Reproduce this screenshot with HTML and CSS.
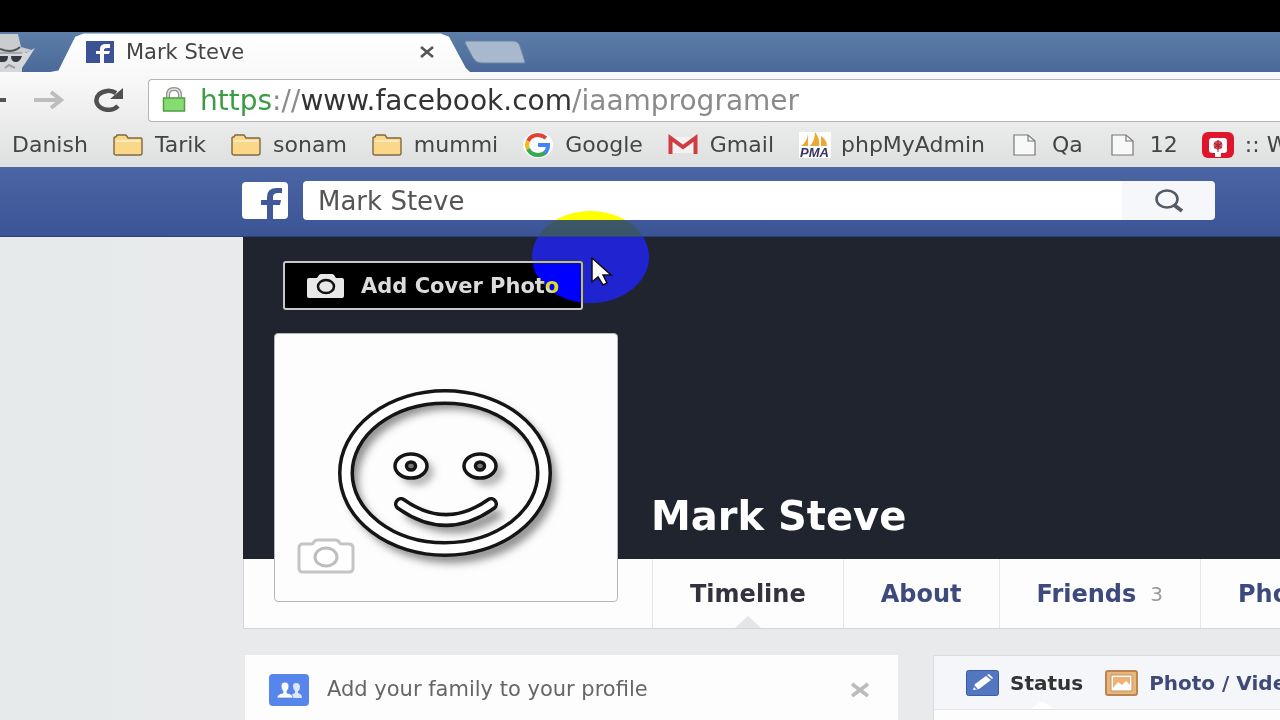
FILE: index.html
```
<!DOCTYPE html>
<html lang="en">
<head>
    <meta charset="UTF-8">
    <meta name="viewport" content="width=device-width, initial-scale=1.0">
    <title>Mark Steve</title>
    <link rel="stylesheet" href="styles.css">
</head>
<body>
    <svg class="defs" width="0" height="0">
        <symbol id="folder" viewBox="0 0 30 22">
            <path d="M1 19V4q0-1 1-1h1l1-2h9l2 3h13q1 0 1 1v14q0 2-2 2H3q-2 0-2-2z" fill="#fbd78a" stroke="#7d6a43" stroke-width="1.4"/>
            <path d="M3 7h24" stroke="#fdebbd" stroke-width="2"/>
        </symbol>
        <symbol id="page" viewBox="0 0 30 22">
            <path d="M4 1h14l7 6v14H4z" fill="#f8f8f8" stroke="#777" stroke-width="1.2"/>
            <path d="M18 1v6h7" fill="none" stroke="#777" stroke-width="1.2"/>
        </symbol>
    </svg>

    <header class="browser">
        <div class="tab-strip">
            <svg class="incognito" width="36" height="40" viewBox="0 0 36 40">
                <path d="M0 2h18l3 13 11 3-12 5H0z" fill="#c9cdd0"/>
                <path d="M0 17q12 5 20-2" fill="none" stroke="#555" stroke-width="2"/>
                <path d="M0 21h26l9-5-7 11-6 9v4H0z" fill="#d5d7d8"/>
                <path d="M0 20h22v2H0z" fill="#a4a9ad"/>
                <path d="M0 24h8q0 6-5 6H0zM11 24h11q-2 6-6 6-5 0-5-6z" fill="#333a42"/>
                <path d="M5 36l4-3 6 3" fill="none" stroke="#9aa0a5" stroke-width="2"/>
            </svg>
            <div class="tab">
                <svg width="28" height="22" viewBox="0 0 28 22">
                    <path d="M0 0h28v22H0z" fill="#3b5295"/>
                    <path d="M14 22v-9h-4v-3h4V8q0-5 6-5h4v4h-3q-3 0-3 2v1h6l-1 3h-5v9z" fill="#fff"/>
                </svg>
                <span class="tab-title">Mark Steve</span>
                <button class="icon-button" aria-label="Close tab">
                    <svg width="14" height="12" viewBox="0 0 14 12"><path d="M1 1l12 10M13 1L1 11" stroke="#555" stroke-width="2.6"/></svg>
                </button>
            </div>
            <button class="icon-button" aria-label="New tab">
                <svg width="62" height="24" viewBox="0 0 62 24"><path d="M3 1h46q5 0 7 5l5 16q0 1-1 1H17q-5 0-8-5L1 3q0-2 2-2z" fill="#a9b9cd" stroke="#6d83a3"/></svg>
            </button>
        </div>

        <div class="toolbar">
            <button class="icon-button" aria-label="Back">
                <svg width="30" height="22" viewBox="0 0 30 22"><path d="M2 11h28M11 3L2 11l9 8" fill="none" stroke="#555" stroke-width="4"/></svg>
            </button>
            <button class="icon-button" aria-label="Forward">
                <svg width="30" height="22" viewBox="0 0 30 22"><path d="M0 11h26M17 3l10 8-10 8" fill="none" stroke="#bdbdbd" stroke-width="4"/></svg>
            </button>
            <button class="icon-button" aria-label="Reload">
                <svg width="32" height="24" viewBox="0 0 32 24"><path d="M26 18a12 9.500 0 1 1-2-13" fill="none" stroke="#505050" stroke-width="4.500"/><path d="M31 0v11H18z" fill="#505050"/></svg>
            </button>
            <div class="address">
                <svg width="24" height="26" viewBox="0 0 24 26">
                    <path d="M6 12V8q0-6 6-6t6 6v4" fill="none" stroke="#8c938b" stroke-width="4"/>
                    <path d="M6 12V8q0-6 6-6t6 6v4" fill="none" stroke="#e6e9e5" stroke-width="1.500"/>
                    <path d="M1.500 11h21v13h-21z" fill="#86dc70" stroke="#4f9e42" stroke-width="1.500"/>
                </svg>
                <span class="url"><span class="secure">https</span>://<span class="host">www.facebook.com</span>/iaamprogramer</span>
            </div>
        </div>

        <nav class="bookmarks">
            <a href="#"><svg><use href="#folder"/></svg>Danish</a>
            <a href="#"><svg><use href="#folder"/></svg>Tarik</a>
            <a href="#"><svg><use href="#folder"/></svg>sonam</a>
            <a href="#"><svg><use href="#folder"/></svg>mummi</a>
            <a href="#">
                <svg viewBox="0 0 30 22">
                    <ellipse cx="15" cy="11" rx="15" ry="13" fill="#fff"/>
                    <g fill="none" stroke-width="4">
                        <path d="M23 4Q19 1 15 1 8 1 5 7" stroke="#dc4437"/>
                        <path d="M5 7q-2 4 0 8" stroke="#f4b822"/>
                        <path d="M5 15q3 6 10 6 5 0 8-3" stroke="#35a853"/>
                        <path d="M15 11h10q0 5-3 8" stroke="#4285f4"/>
                    </g>
                </svg>Google</a>
            <a href="#">
                <svg viewBox="0 0 30 22">
                    <path d="M3 3h24v16H3z" fill="#f2f2f2"/>
                    <path d="M2.500 20V4L15 13 27.500 4v16" fill="none" stroke="#cf3c43" stroke-width="4"/>
                </svg>Gmail</a>
            <a href="#">
                <svg viewBox="0 0 30 22">
                    <path d="M0-2h32v26H0z" fill="#fff"/>
                    <path d="M9 0v12H2q6-4 7-12zM16-2q5 6 4 14h-9q5-6 5-14zM22 2q6 4 6 10h-6z" fill="#eda833"/>
                    <text class="pma" x="1" y="23">PMA</text>
                </svg>phpMyAdmin</a>
            <a href="#"><svg><use href="#page"/></svg>Qa</a>
            <a href="#"><svg><use href="#page"/></svg>12</a>
            <a href="#">
                <svg viewBox="0 0 30 22">
                    <rect x="-1" y="-2" width="32" height="26" rx="6" fill="#e0142c"/>
                    <path d="M12 23v-4H9q-3 0-3-3V7q0-3 3-3h12q3 0 3 3v9q0 3-3 3h-3v4z" fill="#fff"/>
                    <circle cx="15" cy="11" r="4.500" fill="#d84c5c"/>
                    <path d="M11 9l8 5M11 14l8-5M15 6v12" stroke="#9d1c2b"/>
                </svg>:: W</a>
        </nav>
    </header>

    <div class="blue-bar">
        <a href="#" class="logo" aria-label="Facebook">
            <svg width="46" height="38" viewBox="0 0 46 38">
                <rect width="46" height="37" rx="4" fill="#fff"/>
                <path d="M25 37V23h-6v-5h6v-3q0-9 10-9h5v5h-4q-5 0-5 4v3h8l-1 5h-7v14z" fill="#41599b"/>
            </svg>
        </a>
        <form class="search">
            <input type="text" aria-label="Search" value="Mark Steve">
            <button type="button" aria-label="Search">
                <svg width="30" height="24" viewBox="0 0 30 24"><ellipse cx="13" cy="10" rx="10.500" ry="8.500" fill="none" stroke="#555b66" stroke-width="2.600"/><path d="M20 16l8 6" stroke="#555b66" stroke-width="4"/></svg>
            </button>
        </form>
    </div>

    <main class="profile">
        <section class="cover">
            <button class="add-cover">
                <svg width="38" height="24" viewBox="0 0 38 24">
                    <path d="M2 4h8l2-3q1-1 2-1h11q1 0 2 1l2 3h6q2 0 2 2v16q0 2-2 2H2q-2 0-2-2V6q0-2 2-2z" fill="#e8e8e8"/>
                    <ellipse cx="19" cy="12.500" rx="8" ry="6.500" fill="#e8e8e8" stroke="#111" stroke-width="2.500"/>
                </svg>
                Add Cover Photo
            </button>
            <h1>Mark Steve</h1>
            <div class="picture">
                <svg class="smiley" width="230" height="190" viewBox="0 0 230 190">
                    <defs><filter id="soft"><feGaussianBlur stdDeviation="4"/></filter></defs>
                    <g fill="none" stroke="#888" filter="url(#soft)">
                        <ellipse cx="114" cy="95" rx="99" ry="77" stroke-width="12"/>
                        <ellipse cx="80" cy="87" rx="12" ry="9" stroke-width="6"/>
                        <ellipse cx="150" cy="87" rx="12" ry="9" stroke-width="6"/>
                        <path d="M70 127q47 31 93 0" stroke-width="10"/>
                    </g>
                    <g fill="none" stroke="#151515">
                        <ellipse cx="108" cy="88" rx="99" ry="76" stroke-width="16"/>
                        <ellipse cx="108" cy="88" rx="99" ry="76" stroke-width="9" stroke="#fff"/>
                        <ellipse cx="74" cy="81" rx="16" ry="12" fill="#fff" stroke-width="3.500"/>
                        <ellipse cx="143" cy="81" rx="16" ry="12" fill="#fff" stroke-width="3.500"/>
                        <ellipse cx="74" cy="81" rx="4.500" ry="4" fill="#777" stroke-width="3.500"/>
                        <ellipse cx="143" cy="81" rx="4.500" ry="4" fill="#777" stroke-width="3.500"/>
                        <g stroke-linecap="round">
                            <path d="M64 119q45 32 90 0" stroke-width="14"/>
                            <path d="M64 119q45 32 90 0" stroke-width="7" stroke="#fff"/>
                        </g>
                    </g>
                </svg>
                <svg class="camera" width="60" height="40" viewBox="0 0 60 40">
                    <path d="M7 7h8q2 0 3-2t4-2h17q3 0 4 2t3 2h7q4 0 4 4v20q0 4-4 4H7q-4 0-4-4V11q0-4 4-4z" fill="#fff" stroke="#c4c4c6" stroke-width="3"/>
                    <ellipse cx="30" cy="20" rx="11" ry="9" fill="none" stroke="#bdbdc0" stroke-width="3"/>
                </svg>
            </div>
        </section>
        <nav class="profile-nav">
            <a href="#" class="active">Timeline</a>
            <a href="#">About</a>
            <a href="#">Friends <span class="count">3</span></a>
            <a href="#">Photos</a>
        </nav>

        <div class="columns">
            <section class="card family">
                <svg width="40" height="32" viewBox="0 0 40 32">
                    <rect width="40" height="32" rx="4" fill="#5685ec"/>
                    <path d="M22 24q0-4 4-5v-2q-2-2-2-5t3-3q4 0 4 4 0 3-2 4v2q4 1 4 5z" fill="#dce7fd"/>
                    <path d="M8 24q0-4 6-5v-2q-2-2-2-5 0-4 4-4t4 4q0 3-2 5v2q6 1 6 5z" fill="#fff" stroke="#5685ec" stroke-width=".8"/>
                </svg>
                <span class="family-text">Add your family to your profile</span>
                <button class="icon-button" aria-label="Dismiss">
                    <svg width="20" height="16" viewBox="0 0 20 16"><path d="M2 2l16 12M18 2L2 14" stroke="#bbb" stroke-width="3.500"/></svg>
                </button>
            </section>
            <section class="card composer">
                <div class="composer-tabs">
                    <a href="#" class="active">
                        <svg width="33" height="26" viewBox="0 0 33 26">
                            <rect x=".5" y=".5" width="32" height="25" rx="2" fill="#5276c0" stroke="#3d5b9e"/>
                            <path d="M7 20l2-6L20 6l5 4-12 9z" fill="#fff"/>
                            <path d="M21 5l2-1 4 4-1 1z" fill="#fff"/>
                            <path d="M8 16l3 3" stroke="#5276c0" stroke-width="1.500"/>
                        </svg>Status</a>
                    <a href="#">
                        <svg width="33" height="26" viewBox="0 0 33 26">
                            <rect x="1" y="1" width="31" height="24" rx="2" fill="#e6b67c" stroke="#bd8350" stroke-width="2"/>
                            <path d="M6 5h21v16H6z" fill="#fff" stroke="#c98f58"/>
                            <path d="M8 7h17v8l-4-4-4 4-4-3-5 6z" fill="#efb274"/>
                        </svg>Photo / Video</a>
                </div>
            </section>
        </div>
    </main>

    <div class="click-spot"></div>
    <svg class="cursor" width="22" height="30" viewBox="0 0 22 30"><path d="M1 1v24l6-5 5 8 4-2-4-8h8z" fill="#fff" stroke="#111" stroke-width="1.500"/></svg>
</body>
</html>
```
FILE: styles.css
```
* {
    box-sizing: border-box;
}
body {
    display: flex;
    flex-direction: column;
    margin: 0;
    padding-top: 32px;
    min-height: 100vh;
    overflow-x: hidden;
    position: relative;
    background: linear-gradient(#000 32px, transparent 32px), linear-gradient(90deg, #e6eaeb, #e9eaec 260px);
    font-family: "DejaVu Sans", Verdana, sans-serif;
    color: #444;
}
a {
    color: inherit;
    text-decoration: none;
}
svg {
    display: block;
    flex-shrink: 0;
}
button {
    font-family: inherit;
    cursor: pointer;
}
.defs {
    position: absolute;
}
.icon-button {
    padding: 0;
    border: 0;
    background: none;
}

/* browser window */
.browser {
    background: linear-gradient(#fafafa 40px, #dedfdf 100%);
}
.tab-strip {
    display: flex;
    align-items: center;
    height: 40px;
    background: linear-gradient(#5d7ea8, #4b6999);
}
.tab {
    display: flex;
    align-items: center;
    gap: 12px;
    width: 420px;
    height: 40px;
    margin: 0 -6px 0 14px;
    padding: 0 36px;
    background: linear-gradient(#fff, #f9f9f9);
    clip-path: polygon(0 100%, 2% 96%, 6% 12%, 8% 4%, 93% 4%, 95% 12%, 99% 90%, 100% 100%);
}
.tab-title {
    flex: 1;
    font-size: 21px;
}
.toolbar {
    display: flex;
    align-items: center;
    gap: 28px;
    height: 50px;
    margin-left: -24px;
    padding-top: 6px;
}
.address {
    display: flex;
    align-items: center;
    gap: 14px;
    flex: 1;
    height: 43px;
    margin-left: -4px;
    padding-left: 13px;
    background: #fff;
    border: 1px solid #b4b4b4;
    border-right: 0;
    border-radius: 4px 0 0 4px;
}
.url {
    font-size: 28px;
    color: #8b8b8b;
}
.secure {
    color: #3b9c45;
}
.host {
    color: #333;
}
.bookmarks {
    display: flex;
    align-items: center;
    gap: 25px;
    height: 45px;
    margin-left: -30px;
    font-size: 22px;
    white-space: nowrap;
    overflow: hidden;
}
.bookmarks a {
    display: flex;
    align-items: center;
    gap: 12px;
}
.bookmarks svg {
    width: 30px;
    height: 22px;
    overflow: visible;
}
.pma {
    font: italic bold 13px "Liberation Sans", Arial, sans-serif;
    fill: #34345f;
}

/* facebook bar */
.blue-bar {
    display: flex;
    align-items: center;
    gap: 15px;
    height: 70px;
    padding: 0 65px 2px 242px;
    background: linear-gradient(#4c65a3, #3a5496);
    border-bottom: 1px solid #2c4179;
}
.search {
    display: flex;
    flex: 1;
    height: 39px;
    border-radius: 4px;
    overflow: hidden;
}
.search input {
    flex: 1;
    min-width: 0;
    padding: 0 15px;
    border: 0;
    background: #fff;
    font-family: inherit;
    font-size: 26px;
    color: #555;
}
.search button {
    display: flex;
    align-items: center;
    justify-content: center;
    width: 93px;
    border: 0;
    background: #f5f7fa;
}

/* profile */
.profile {
    display: flex;
    flex-direction: column;
    flex: 1;
    margin-left: 243px;
}
.cover {
    display: flex;
    flex-direction: column;
    align-items: flex-start;
    justify-content: space-between;
    position: relative;
    height: 322px;
    padding: 24px 40px 18px;
    background: #20242f;
}
.add-cover {
    display: flex;
    align-items: center;
    gap: 16px;
    height: 49px;
    padding: 0 22px;
    border: 2px solid #c8c8cc;
    border-radius: 3px;
    background: #000;
    color: #dcdcdc;
    font-size: 21px;
    font-weight: bold;
}
h1 {
    margin: 0 0 0 368px;
    color: #fff;
    font-size: 40px;
    line-height: 50px;
}
.picture {
    position: absolute;
    left: 31px;
    top: 96px;
    width: 344px;
    height: 269px;
    border: 1px solid #b5b5b9;
    border-radius: 4px;
    background: #fdfdfd;
}
.smiley {
    margin: 51px 0 0 62px;
}
.camera {
    position: absolute;
    left: 21px;
    bottom: 24px;
}
.profile-nav {
    display: flex;
    height: 70px;
    padding-left: 408px;
    background: #fdfdfe;
    border: 1px solid #d4d5d9;
    border-width: 0 0 1px 1px;
    color: #3e4a7c;
    font-size: 24px;
    font-weight: bold;
    white-space: nowrap;
    overflow: hidden;
}
.profile-nav a {
    display: flex;
    align-items: center;
    position: relative;
    padding: 0 37px;
    border-left: 1px solid #e6e7ea;
}
.profile-nav .active {
    color: #33333f;
}
.profile-nav .active::after {
    content: "";
    position: absolute;
    left: 50%;
    bottom: 0;
    margin-left: -13px;
    border: 13px solid transparent;
    border-top-width: 0;
    border-bottom: 12px solid #e4e5e8;
}
.count {
    margin-left: 14px;
    color: #9a9a9e;
    font-size: 20px;
    font-weight: normal;
}
.columns {
    display: flex;
    flex: 1;
    gap: 35px;
    margin: 26px 0 0 2px;
}
.card {
    background: #fdfdfe;
}
.family {
    display: flex;
    align-items: flex-start;
    gap: 18px;
    flex: 0 0 653px;
    padding: 19px 28px 0 24px;
}
.family-text {
    flex: 1;
    color: #666;
    font-size: 21px;
    line-height: 30px;
}
.family .icon-button {
    padding-top: 8px;
}
.composer {
    flex: 1;
    min-width: 0;
    border: 1px solid #dcdde1;
    border-width: 1px 0 0 1px;
}
.composer-tabs {
    display: flex;
    align-items: center;
    gap: 22px;
    height: 54px;
    padding-left: 32px;
    background: #f5f6f9;
    border-bottom: 1px solid #e3e4e8;
    color: #3f4b76;
    font-size: 20px;
    font-weight: bold;
    white-space: nowrap;
    overflow: hidden;
}
.composer-tabs a {
    display: flex;
    align-items: center;
    gap: 11px;
    position: relative;
    height: 54px;
}
.composer-tabs .active {
    color: #333;
}
.composer-tabs .active::after {
    content: "";
    position: absolute;
    left: 63px;
    bottom: 0;
    border: 13px solid transparent;
    border-top-width: 0;
    border-bottom: 9px solid #fff;
}

/* pointer */
.click-spot {
    position: absolute;
    left: 532px;
    top: 211px;
    width: 117px;
    height: 92px;
    border-radius: 50%;
    background: #00f;
    mix-blend-mode: difference;
    pointer-events: none;
}
.cursor {
    position: absolute;
    left: 591px;
    top: 257px;
}
```
